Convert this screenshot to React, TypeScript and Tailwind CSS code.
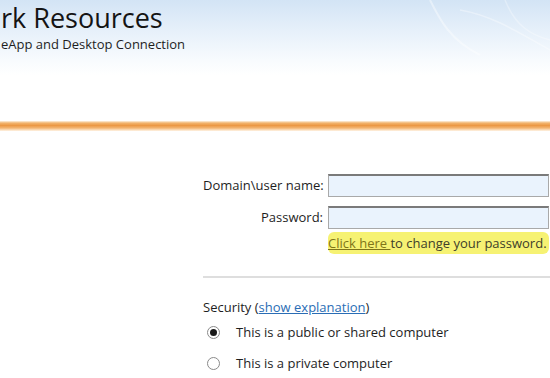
import { useState } from "react";

export default function App() {
    const [shared, setShared] = useState(true);

    return (
        <div className="w-[550px] h-[378px] overflow-hidden bg-white text-[#1e1e1e] font-['Open_Sans',sans-serif]">
            {/* header band */}
            <div className="relative h-[121px] bg-[linear-gradient(to_bottom,#d3e4f5_0%,#e6f0fa_25%,#f8fbfe_50%,#ffffff_62%)]">
                <svg className="absolute right-0 top-0" width="130" height="70" viewBox="0 0 130 70" fill="none">
                    <path d="M10 0 C20 20 30 40 60 55" stroke="#ffffff" strokeOpacity="0.4" strokeWidth="2" />
                    <path d="M40 10 C70 15 95 30 130 50" stroke="#ffffff" strokeOpacity="0.35" strokeWidth="1.5" />
                    <path d="M85 0 C95 25 110 35 130 40" stroke="#ffffff" strokeOpacity="0.3" strokeWidth="1.5" />
                </svg>
                <div className="relative pt-[1px] pl-[1px]">
                    <h1 className="text-[27px] leading-[34px] font-normal text-[#141414] whitespace-nowrap">rk Resources</h1>
                    <p className="mt-[1px] text-[13px] leading-[17px] text-[#1e1e1e] whitespace-nowrap">eApp and Desktop Connection</p>
                </div>
            </div>
            {/* orange rule */}
            <div className="h-[10px] bg-[linear-gradient(to_bottom,#fdf1e2_0%,#f2b46e_20%,#eb9845_45%,#f3b572_70%,#fff4e6_100%)]" />

            {/* form */}
            <div className="ml-[203px] pt-[43px] text-[13px]">
                <div className="grid grid-cols-[120px_221px] gap-x-[5px] gap-y-[9px] items-center">
                    <label className="text-right whitespace-nowrap">Domain\user name:</label>
                    <input className="h-[23px] border border-[#a9a9a9] border-t-2 border-t-[#7a7a7a] bg-[#eaf3fd] outline-none" />
                    <label className="text-right whitespace-nowrap">Password:</label>
                    <input type="password" className="h-[23px] border border-[#a9a9a9] border-t-2 border-t-[#7a7a7a] bg-[#eaf3fd] outline-none" />
                    <div />
                    <div className="-mt-[4px] whitespace-nowrap">
                        <span className="bg-[#f6f273] rounded-[6px] py-[2px] pr-[2px]">
                            <a href="#" className="underline text-[#7f7519]">Click here </a>
                            <span className="text-[#40402a]">to change your password.</span>
                        </span>
                    </div>
                </div>

                <div className="mt-[22px] h-[2px] bg-[#dedede]" />

                <div className="mt-[20px]">
                    <div>
                        Security (<a href="#" className="underline text-[#2a6db5]">show explanation</a>)
                    </div>
                    <div className="mt-[6px] flex flex-col gap-[11px]">
                        <label className="flex items-center gap-[16px] pl-[4px]" onClick={() => setShared(true)}>
                            <span className="w-[13px] h-[13px] rounded-full border border-[#8a8a8a] bg-white flex items-center justify-center">
                                {shared && <span className="w-[7px] h-[7px] rounded-full bg-[#1a1a1a]" />}
                            </span>
                            <span>This is a public or shared computer</span>
                        </label>
                        <label className="flex items-center gap-[16px] pl-[4px]" onClick={() => setShared(false)}>
                            <span className="w-[13px] h-[13px] rounded-full border border-[#8a8a8a] bg-white flex items-center justify-center">
                                {!shared && <span className="w-[7px] h-[7px] rounded-full bg-[#1a1a1a]" />}
                            </span>
                            <span>This is a private computer</span>
                        </label>
                    </div>
                </div>
            </div>
        </div>
    );
}
